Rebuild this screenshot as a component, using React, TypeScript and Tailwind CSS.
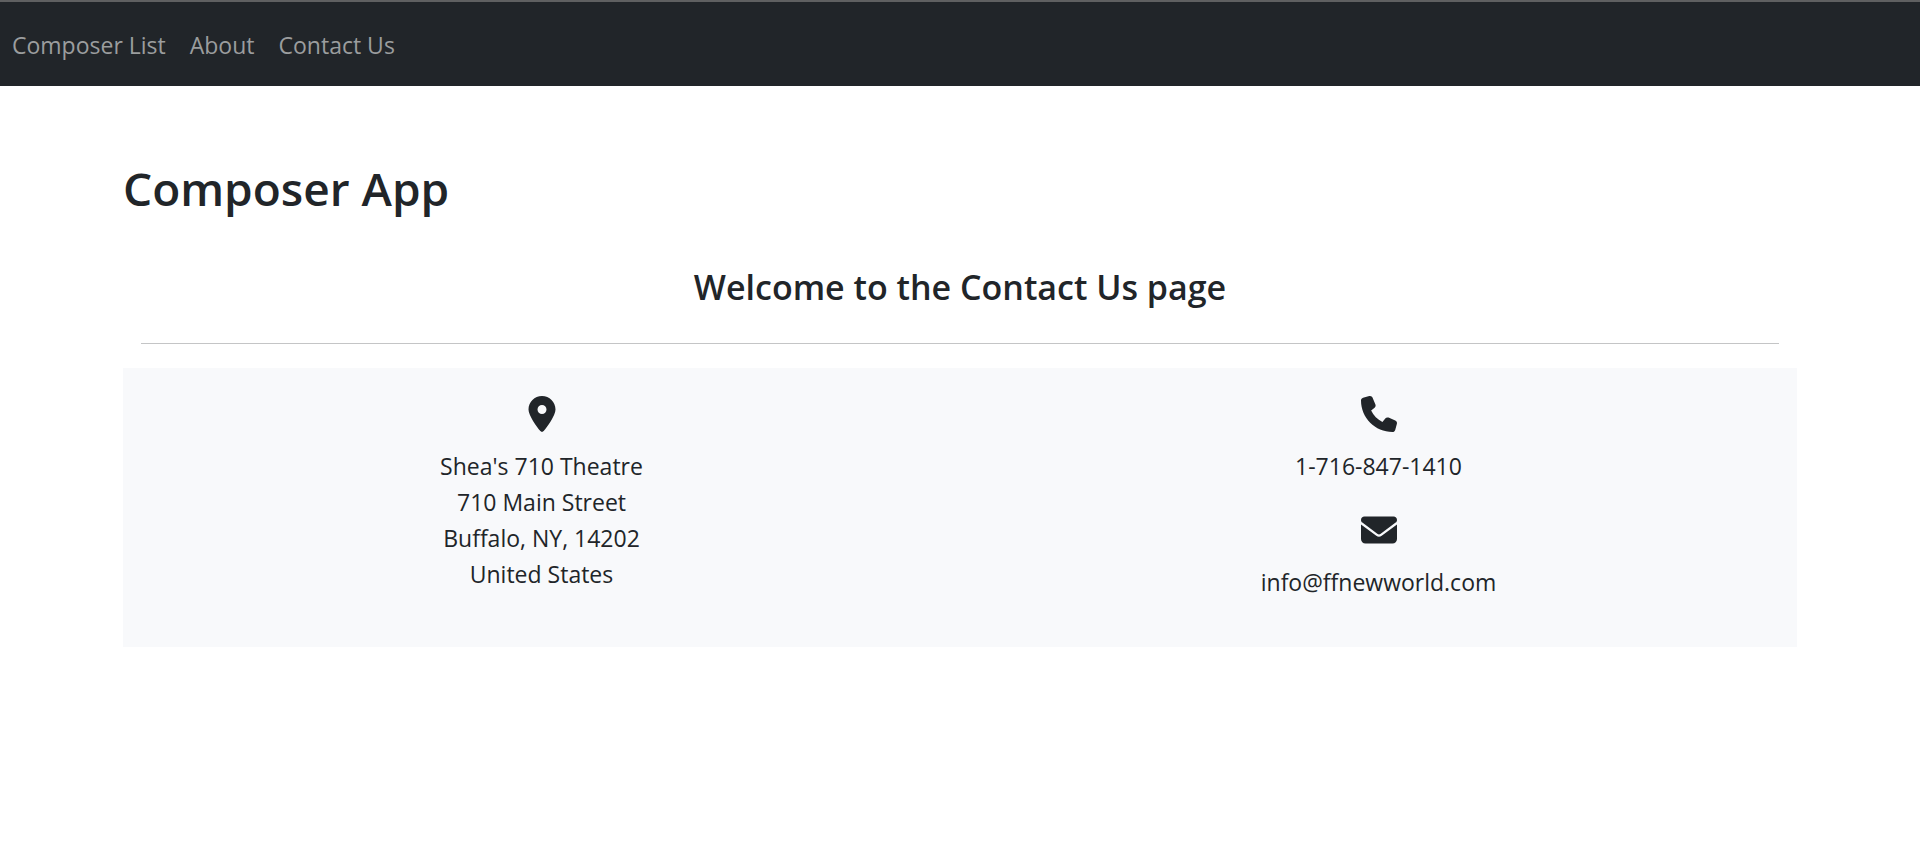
import type { ReactNode } from "react";
import { FaEnvelope, FaLocationDot, FaPhone } from "react-icons/fa6";

const links = ["Composer List", "About", "Contact Us"];

function ContactItem({ icon, children }: { icon: ReactNode; children: ReactNode }) {
  return (
    <div className="flex flex-col items-center gap-4 text-4xl">
      {icon}
      <div className="text-[23px] leading-9">{children}</div>
    </div>
  );
}

export default function App() {
  return (
    <div className="font-['Open_Sans','Noto_Sans',sans-serif] text-[#212529]">
      <nav className="flex gap-6 border-t-2 border-[#5f6061] bg-[#212529] px-3 pt-[25px] pb-[23px] text-[23px] leading-9 text-[#9b9d9e]">
        {links.map((label) => (
          <a key={label} href="#">
            {label}
          </a>
        ))}
      </nav>
      <main className="mx-[123px] pt-[72px]">
        <h1 className="text-[46px] leading-[60px] font-semibold">Composer App</h1>
        <div className="px-[18px] pt-12 text-center">
          <h2 className="text-[34px] leading-[42px] font-semibold">Welcome to the Contact Us page</h2>
          <hr className="mt-[35px] border-[#c4c5c6]" />
        </div>
        <section className="mt-6 grid grid-cols-2 bg-[#f8f9fb] pt-7 pb-[47px] text-center">
          <ContactItem icon={<FaLocationDot aria-hidden="true" />}>
            <address className="not-italic">
              Shea's 710 Theatre
              <br />
              710 Main Street
              <br />
              Buffalo, NY, 14202
              <br />
              United States
            </address>
          </ContactItem>
          <div className="flex flex-col gap-7">
            <ContactItem icon={<FaPhone aria-hidden="true" />}>1-716-847-1410</ContactItem>
            <ContactItem icon={<FaEnvelope aria-hidden="true" />}>info@ffnewworld.com</ContactItem>
          </div>
        </section>
      </main>
    </div>
  );
}
